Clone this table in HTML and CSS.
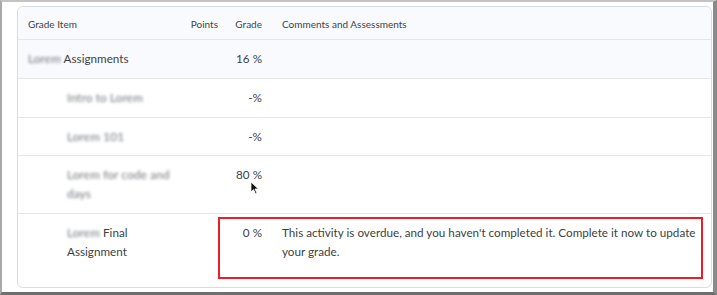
FILE: index.html
```html
<!DOCTYPE html>
<html>
<head>
<meta charset="utf-8">
<link rel="stylesheet" href="styles.css">
</head>
<body>
<div class="frame">
  <div class="card">
    <table class="grades">
      <colgroup>
        <col class="c-item"><col class="c-points"><col class="c-grade"><col class="c-comments">
      </colgroup>
      <thead>
        <tr class="head">
          <th class="item">Grade Item</th>
          <th class="num">Points</th>
          <th class="num">Grade</th>
          <th class="comm">Comments and Assessments</th>
        </tr>
      </thead>
      <tbody>
        <tr class="cat r1">
          <td class="item"><span class="blur">Lorem</span> Assignments</td>
          <td class="num"></td>
          <td class="num">16 %</td>
          <td class="comm"></td>
        </tr>
        <tr class="r2">
          <td class="item sub"><span class="blur">Intro to Lorem</span></td>
          <td class="num"></td>
          <td class="num">-%</td>
          <td class="comm"></td>
        </tr>
        <tr class="r3">
          <td class="item sub"><span class="blur">Lorem 101</span></td>
          <td class="num"></td>
          <td class="num">-%</td>
          <td class="comm"></td>
        </tr>
        <tr class="r4">
          <td class="item sub"><span class="blur">Lorem for code and<br>days</span></td>
          <td class="num"></td>
          <td class="num">80 %</td>
          <td class="comm"></td>
        </tr>
        <tr class="r5">
          <td class="item sub"><span class="blur">Lorem</span> Final<br>Assignment</td>
          <td class="num"></td>
          <td class="num">0 %</td>
          <td class="comm">This activity is overdue, and you haven't completed it. Complete it now to update your grade.</td>
        </tr>
      </tbody>
    </table>
    <div class="highlight"></div>
    <svg class="cursor" width="10" height="15" viewBox="0 0 10 15">
      <path d="M1 1 L1 11 L3.5 8.6 L5.6 13 L7 12.3 L5 8 L8.4 8 Z" fill="#111" stroke="#fff" stroke-width="0.8"/>
    </svg>
  </div>
</div>
</body>
</html>
```
FILE: styles.css
```css
html, body {
  margin: 0;
  padding: 0;
  background: #ffffff;
}
.frame {
  width: 717px;
  height: 295px;
  box-sizing: border-box;
  border-left: 2px solid #a9a9a9;
  border-top: 2px solid #c4c4c4;
  border-right: 4px solid #8a8a8a;
  border-bottom: 3px solid #6f6f6f;
  background: #fff;
  padding: 4px 0 0 15px;
  font-family: Lato, "Open Sans", sans-serif;
  color: #494c4e;
}
.card {
  position: relative;
  width: 695px;
  height: 282px;
  box-sizing: border-box;
  border: 1px solid #d7dbe2;
  border-radius: 6px;
  overflow: hidden;
}
.grades {
  width: 100%;
  border-collapse: collapse;
  table-layout: fixed;
}
.c-item { width: 166px; }
.c-points { width: 42px; }
.c-grade { width: 44px; }
.grades th, .grades td {
  padding: 0;
  vertical-align: top;
  text-align: left;
  font-weight: normal;
}
.grades tr { border-bottom: 1px solid #e3e6eb; }
.grades tr.r5 { border-bottom: none; }
.head {
  background: #f9fafe;
  height: 32px;
}
.head th {
  font-size: 10px;
  line-height: 14px;
  padding-top: 10px;
  color: #3f4246;
}
.grades td {
  font-size: 11.7px;
  line-height: 19.5px;
  padding-top: 9px;
  color: #3c3f42;
}
.item { padding-left: 10px !important; }
.sub { padding-left: 49px !important; }
.num { text-align: right !important; padding-right: 8px !important; }
.comm { padding-left: 12px !important; padding-right: 6px !important; }
.cat { background: #f9fafe; }
.r1 { height: 39px; }
.r2 { height: 39px; }
.r3 { height: 38px; }
.r4 { height: 58px; }
.r5 { height: 74px; }
.blur {
  display: inline-block;
  filter: blur(1.4px);
  color: #6f7378;
  letter-spacing: 0.2px;
}
.highlight {
  position: absolute;
  left: 200px;
  top: 210px;
  width: 485px;
  height: 62px;
  box-sizing: border-box;
  border: 2px solid #ee1c24;
}
.cursor {
  position: absolute;
  left: 232px;
  top: 174px;
}
```
